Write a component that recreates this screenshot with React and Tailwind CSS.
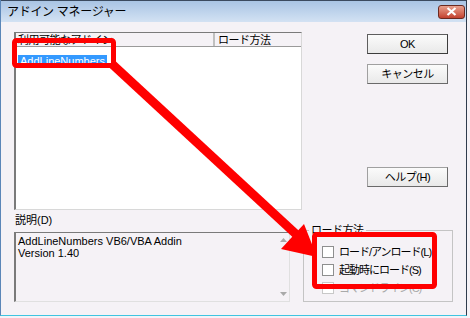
import React from "react";

const font = { fontFamily: '"Liberation Sans", "Noto Sans CJK JP", sans-serif' };

function Btn({ children, strong }) {
  return (
    <button
      className={
        "w-[81px] h-[20px] flex items-center justify-center text-[11px] leading-none text-black tracking-[-0.5px] bg-gradient-to-b from-[#fbfbfb] to-[#e9e9e9] border " +
        (strong
          ? "border-[#5e5e5e] border-b-[#3c3c3c] border-r-[#3c3c3c]"
          : "border-[#a0a0a0] border-b-[#6a6a6a] border-r-[#6a6a6a]")
      }
    >
      {children}
    </button>
  );
}

function Check({ label, disabled }) {
  return (
    <div className="flex items-center h-[18px] whitespace-nowrap">
      <span
        className={
          "shrink-0 w-[12px] h-[12px] border bg-white " +
          (disabled ? "border-[#c8c8c8]" : "border-[#8e8f8f]")
        }
      />
      <span
        className={
          "ml-[5px] text-[11px] leading-none tracking-[-1px] " +
          (disabled ? "text-[#a9a9a9]" : "text-black")
        }
      >
        {label}
      </span>
    </div>
  );
}

export default function App() {
  return (
    <div className="relative w-[470px] h-[318px] bg-[#f5f2f6] overflow-hidden" style={font}>
      <div className="flex flex-col w-[467px] h-[316px] border-l border-r border-b border-l-[#5b86b8] border-r-[#2f3b4c] border-b-[#3fc4e0]">
        {/* title bar */}
        <div className="h-[22px] flex items-center justify-between bg-gradient-to-b from-[#a9c4e4] to-[#d3e2f3] border-t border-[#3b4a5f]">
          <span className="pl-[6px] text-[12px] text-black tracking-[-0.3px]">アドイン マネージャー</span>
          <div className="mr-[1px] w-[27px] h-[14px] rounded-[3px] border border-[#6b2a20] bg-gradient-to-b from-[#e8a08e] to-[#c2402e] flex items-center justify-center">
            <svg width="11" height="9" viewBox="0 0 11 9">
              <path d="M1.5 1 L9.5 8 M9.5 1 L1.5 8" stroke="#ffffff" strokeWidth="2.2" />
            </svg>
          </div>
        </div>

        {/* body */}
        <div className="flex-1 pl-[13px] pt-[10px]">
          <div className="flex">
            {/* add-in list */}
            <div className="w-[288px] h-[178px] bg-white border-t border-l-2 border-r border-b border-t-[#7a7a7a] border-l-[#7a7a7a] border-r-[#d8d8d8] border-b-[#d8d8d8]">
              <div className="flex h-[14px] bg-[#f5f2f6] border-b border-[#9a9a9a] text-[11px] leading-[14px] tracking-[-0.5px]">
                <div className="w-[199px] pl-[2px] border-r-2 border-[#c0c0c0] whitespace-nowrap overflow-hidden">
                  利用可能なアドイン
                </div>
                <div className="pl-[3px]">ロード方法</div>
              </div>
              <div className="pt-px pl-[2px]">
                <span className="inline-block bg-[#3399ff] text-white text-[11px] leading-[13px] px-[2px]">
                  AddLineNumbers
                </span>
              </div>
            </div>

            {/* buttons */}
            <div className="ml-[65px] flex flex-col pt-[2px]">
              <Btn strong>OK</Btn>
              <div className="mt-[10px]">
                <Btn>キャンセル</Btn>
              </div>
              <div className="mt-[83px]">
                <Btn>ヘルプ(H)</Btn>
              </div>
            </div>
          </div>

          {/* bottom row */}
          <div className="flex items-end">
            <div className="flex flex-col">
              <div className="mt-[2px] text-[11px] leading-[16px] pl-px">説明(D)</div>
              <div className="mt-[4px] w-[276px] h-[70px] flex border-t border-l-2 border-r border-b border-t-[#7a7a7a] border-l-[#7a7a7a] border-r-[#e0e0e0] border-b-[#e0e0e0]">
                <div className="flex-1 pl-[2px] pt-[2px] text-[11px] leading-[12px] text-black">
                  <div>AddLineNumbers VB6/VBA Addin</div>
                  <div>Version 1.40</div>
                </div>
                <div className="w-[12px] flex flex-col justify-between items-center py-[5px] bg-[#f5f2f6]">
                  <svg width="7" height="4" viewBox="0 0 7 4">
                    <path d="M0 4 L3.5 0 L7 4 Z" fill="#a9a9a9" />
                  </svg>
                  <svg width="7" height="4" viewBox="0 0 7 4">
                    <path d="M0 0 L3.5 4 L7 0 Z" fill="#a9a9a9" />
                  </svg>
                </div>
              </div>
            </div>

            <fieldset className="ml-[13px] w-[150px] h-[79px] border border-[#c4c4c4]">
              <legend className="ml-[5px] px-[2px] text-[11px] leading-[14px] tracking-[-0.5px]">ロード方法</legend>
              <div className="pl-[18px] pt-[6px]">
                <Check label="ロード/アンロード(L)" />
                <Check label="起動時にロード(S)" />
                <Check label="コマンドライン(C)" disabled />
              </div>
            </fieldset>
          </div>
        </div>
      </div>

      {/* red annotation overlay */}
      <svg className="absolute inset-0 pointer-events-none" width="470" height="318" viewBox="0 0 470 318">
        <rect x="14.5" y="40.5" width="99" height="25" rx="2" fill="none" stroke="#ff0000" strokeWidth="5" />
        <rect x="314.5" y="234.5" width="120" height="52" rx="2" fill="none" stroke="#ff0000" strokeWidth="5" />
        <line x1="112" y1="64" x2="298" y2="236" stroke="#ff0000" strokeWidth="9" />
        <polygon points="281,249 304,224 317,257" fill="#ff0000" />
      </svg>
    </div>
  );
}
